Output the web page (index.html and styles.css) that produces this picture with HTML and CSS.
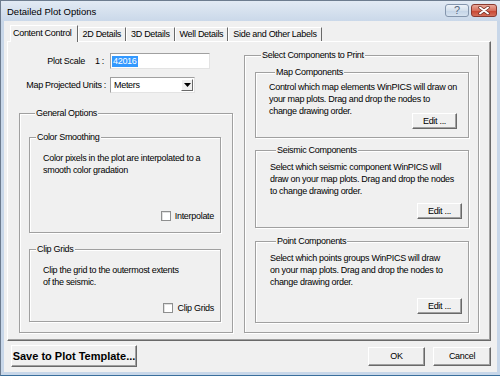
FILE: index.html
```html
<!DOCTYPE html>
<html>
<head>
<meta charset="utf-8">
<title>Detailed Plot Options</title>
<link rel="stylesheet" href="styles.css">
</head>
<body>
<div class="window">
  <div class="titlebar">
    <span class="title">Detailed Plot Options</span>
    <div class="caption-btns">
      <span class="cbtn help">?</span>
      <span class="cbtn close">
        <svg width="12" height="9" viewBox="0 0 12 9">
          <path d="M2 1.5 L10 7.5 M10 1.5 L2 7.5" stroke="#6b2a22" stroke-width="3.4" stroke-linecap="round"/>
          <path d="M2 1.5 L10 7.5 M10 1.5 L2 7.5" stroke="#ffffff" stroke-width="2" stroke-linecap="round"/>
        </svg>
      </span>
    </div>
  </div>
  <div class="client">
    <div class="tabs">
      <div class="tab active">Content Control</div>
      <div class="tab">2D Details</div>
      <div class="tab">3D Details</div>
      <div class="tab">Well Details</div>
      <div class="tab">Side and Other Labels</div>
    </div>
    <div class="panel">
      <div class="col-left">
        <div class="form">
          <span class="lbl"><span>Plot Scale</span><span class="ratio">1 :</span></span>
          <div class="textbox"><span class="sel">42016</span></div>
          <span class="lbl">Map Projected Units :</span>
          <div class="combo">
            <span class="combo-val">Meters</span>
            <span class="combo-btn">
              <svg width="7" height="4" viewBox="0 0 7 4"><path d="M0 0 H7 L3.5 4 Z" fill="#000"/></svg>
            </span>
          </div>
        </div>
        <fieldset class="group general">
          <legend>General Options</legend>
          <fieldset class="group sub color">
            <legend>Color Smoothing</legend>
            <p class="desc">Color pixels in the plot are interpolated to a<br>smooth color gradation</p>
            <div class="check-row"><span class="checkbox"></span><span>Interpolate</span></div>
          </fieldset>
          <fieldset class="group sub clip">
            <legend>Clip Grids</legend>
            <p class="desc">Clip the grid to the outermost extents<br>of the seismic.</p>
            <div class="check-row"><span class="checkbox"></span><span>Clip Grids</span></div>
          </fieldset>
        </fieldset>
      </div>
      <div class="col-right">
        <fieldset class="group select">
          <legend>Select Components to Print</legend>
          <fieldset class="group comp map">
            <legend>Map Components</legend>
            <p class="desc">Control which map elements WinPICS will draw on<br>your map plots. Drag and drop the nodes to<br>change drawing order.</p>
            <div class="btn-row"><span class="btn edit">Edit ...</span></div>
          </fieldset>
          <fieldset class="group comp seismic">
            <legend>Seismic Components</legend>
            <p class="desc">Select which seismic component WinPICS will<br>draw on your map plots. Drag and drop the nodes<br>to change drawing order.</p>
            <div class="btn-row"><span class="btn edit">Edit ...</span></div>
          </fieldset>
          <fieldset class="group comp point">
            <legend>Point Components</legend>
            <p class="desc">Select which points groups WinPICS will draw<br>on your map plots. Drag and drop the nodes to<br>change drawing order.</p>
            <div class="btn-row"><span class="btn edit">Edit ...</span></div>
          </fieldset>
        </fieldset>
      </div>
    </div>
    <div class="footer">
      <span class="btn save">Save to Plot Template...</span>
      <span class="btn ok">OK</span>
      <span class="btn cancel">Cancel</span>
    </div>
  </div>
</div>
</body>
</html>
```

FILE: styles.css
```css
* { box-sizing: border-box; }
html, body { margin: 0; padding: 0; }
body {
  width: 500px;
  height: 376px;
  overflow: hidden;
  font-family: "Liberation Sans", Arial, sans-serif;
  font-size: 9px;
  letter-spacing: -0.3px;
  color: #000;
  background: #c9d8ea;
}

.window {
  width: 500px;
  height: 376px;
  display: flex;
  flex-direction: column;
  background: #c8d7e9;
  border-left: 1px solid #6d7c8f;
  border-top: 1px solid #6d7c8f;
  border-bottom: 1px solid #3a6f9c;
}

/* title bar */
.titlebar {
  height: 20px;
  flex: none;
  display: flex;
  align-items: center;
  padding: 0 3px 0 6px;
  background: linear-gradient(#e2eaf4, #cad8e9);
}
.title {
  font-size: 9.5px;
  letter-spacing: 0;
  color: #000;
}
.caption-btns {
  margin-left: auto;
  align-self: flex-start;
  margin-top: 3px;
  display: flex;
  gap: 2px;
}
.cbtn {
  height: 13px;
  display: flex;
  align-items: center;
  justify-content: center;
  border-radius: 3px;
}
.help {
  width: 24px;
  border: 1px solid #8596ad;
  background: linear-gradient(#eef3f9, #d3dfec 50%, #c3d3e6 51%, #d6e2ef);
  color: #56667c;
  font-size: 11px;
  letter-spacing: 0;
  line-height: 11px;
}
.close {
  width: 26px;
  border: 1px solid #8a3a30;
  background: linear-gradient(#e9a99b, #d7705e 50%, #c8432f 51%, #d4705c);
}

/* client */
.client {
  flex: 1;
  margin: 0 3px 3px 3px;
  background: #f0f0f0;
  padding-top: 4px;
  display: flex;
  flex-direction: column;
}

.tabs {
  display: flex;
  align-items: flex-end;
  height: 16px;
  padding-left: 6px;
}
.tab {
  height: 14px;
  line-height: 12px;
  padding: 0 4px;
  border-top: 1px solid #fff;
  border-left: 1px solid #fff;
  border-right: 1px solid #696969;
  white-space: nowrap;
}
.tab.active {
  position: relative;
  height: 17px;
  margin-bottom: -1px;
  padding: 1px 5px 0 2px;
  background: #f0f0f0;
  z-index: 1;
}

.panel {
  height: 300px;
  margin: 0 6px 0 3px;
  display: flex;
  gap: 11px;
  padding: 0 11px;
  border-top: 1px solid #fff;
  border-left: 1px solid #fff;
  border-right: 1px solid #696969;
  border-bottom: 1px solid #696969;
  box-shadow: inset -1px -1px 0 #a0a0a0;
}

.col-left {
  width: 214px;
  padding-top: 11px;
}
.col-right {
  width: 235px;
  padding-top: 8px;
}

/* form */
.form {
  display: grid;
  grid-template-columns: 87px auto;
  column-gap: 4px;
  row-gap: 8px;
  align-items: center;
  justify-items: start;
}
.lbl {
  justify-self: end;
  white-space: nowrap;
  display: flex;
  gap: 10px;
}
.ratio { margin-right: 2px; }
.textbox {
  width: 100px;
  height: 16px;
  background: #fff;
  border: 1px solid;
  border-color: #a0a0a0 #e3e3e3 #e3e3e3 #a0a0a0;
  padding: 1px 1px;
  display: flex;
  align-items: center;
}
.sel {
  background: #3399ff;
  color: #fff;
  line-height: 11px;
  padding: 0 1px;
}
.combo {
  width: 85px;
  height: 16px;
  background: #fff;
  border: 1px solid;
  border-color: #a0a0a0 #e3e3e3 #e3e3e3 #a0a0a0;
  display: flex;
  align-items: center;
  padding: 1px;
}
.combo-val { padding-left: 2px; flex: 1; }
.combo-btn {
  width: 12px;
  height: 100%;
  background: #f0f0f0;
  border-top: 1px solid #fff;
  border-left: 1px solid #fff;
  border-right: 1px solid #696969;
  border-bottom: 1px solid #696969;
  display: flex;
  align-items: center;
  justify-content: center;
}

/* group boxes */
fieldset.group {
  margin: 0;
  padding: 0;
  min-width: 0;
  border: 1px solid #a0a0a0;
  box-shadow: inset 1px 1px 0 #fff, 1px 1px 0 #fff;
}
fieldset.group > legend {
  margin-left: 6px;
  padding: 0 1px;
  line-height: 11px;
  background: #f0f0f0;
}
.desc {
  margin: 0;
  line-height: 12px;
  white-space: nowrap;
}

.general {
  width: 214px;
  margin-top: 15px !important;
  padding: 13px 11px 10px 9px !important;
  display: flex;
  flex-direction: column;
  gap: 11px;
}
.sub {
  width: 192px;
  display: flex;
  flex-direction: column;
}
.sub .desc { padding-left: 13px; }
.color { padding: 9px 0 10px 0 !important; }
.color .check-row { margin-top: 34px; }
.clip { padding: 9px 0 7px 0 !important; }
.clip .check-row { margin-top: 14px; }

.check-row {
  display: flex;
  align-items: center;
  justify-content: flex-end;
  gap: 4px;
  height: 12px;
  padding-right: 6px;
}
.checkbox {
  width: 10px;
  height: 10px;
  background: #fff;
  border: 1px solid #8e8f8f;
  box-shadow: inset 1px 1px 0 #e0e0e0;
}

.select {
  width: 235px;
  padding: 6px 0 9px 10px !important;
  display: flex;
  flex-direction: column;
}
.comp {
  width: 214px;
  padding: 5px 0 8px 14px !important;
  display: flex;
  flex-direction: column;
}
.map { padding: 3px 0 8px 13px !important; }
.seismic { margin-top: 7px !important; }
.point { margin-top: 8px !important; }

.btn-row {
  display: flex;
  justify-content: flex-end;
}
.map .btn-row { margin-top: -4px; padding-right: 11px; }
.seismic .btn-row { margin-top: 6px; padding-right: 6px; }
.point .btn-row { margin-top: 10px; padding-right: 6px; }

.btn {
  display: flex;
  align-items: center;
  justify-content: center;
  background: #f0f0f0;
  border-top: 1px solid #fff;
  border-left: 1px solid #fff;
  border-right: 1px solid #696969;
  border-bottom: 1px solid #696969;
  box-shadow: inset -1px -1px 0 #a0a0a0;
  white-space: nowrap;
}
.edit {
  width: 45px;
  height: 16px;
}

/* footer */
.footer {
  height: 22px;
  margin-top: 4px;
  padding: 0 6px 0 7px;
  display: flex;
  align-items: center;
}
.save {
  width: 126px;
  height: 22px;
  font-size: 11px;
  font-weight: bold;
  letter-spacing: 0;
}
.ok {
  width: 57px;
  height: 19px;
  margin-left: auto;
}
.cancel {
  width: 58px;
  height: 19px;
  margin-left: 8px;
}
```
